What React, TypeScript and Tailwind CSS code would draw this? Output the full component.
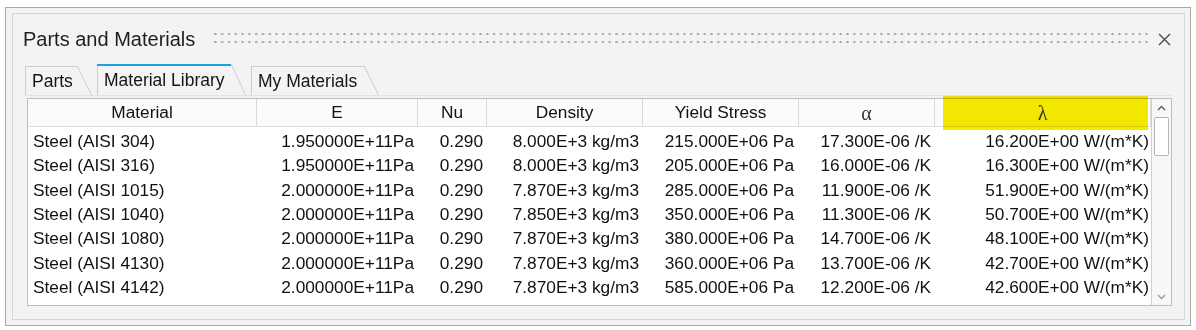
import React from 'react';

type Column = {
  label: string;
  width: string;
  body: string;
  serif?: boolean;
};

const columns: Column[] = [
  { label: 'Material', width: 'w-[229px]', body: 'justify-start pl-[5px]' },
  { label: 'E', width: 'w-[161px]', body: 'justify-end pr-[4px]' },
  { label: 'Nu', width: 'w-[69px]', body: 'justify-end pr-[4px]' },
  { label: 'Density', width: 'w-[156px]', body: 'justify-end pr-[4px]' },
  { label: 'Yield Stress', width: 'w-[156px]', body: 'justify-end pr-[5px]' },
  { label: 'α', width: 'w-[136px]', body: 'justify-end pr-[4px]', serif: true },
  { label: 'λ', width: 'w-[216px]', body: 'justify-end pr-[2px]', serif: true },
];

const rows: string[][] = [
  ['Steel (AISI 304)', '1.950000E+11Pa', '0.290', '8.000E+3 kg/m3', '215.000E+06 Pa', '17.300E-06 /K', '16.200E+00 W/(m*K)'],
  ['Steel (AISI 316)', '1.950000E+11Pa', '0.290', '8.000E+3 kg/m3', '205.000E+06 Pa', '16.000E-06 /K', '16.300E+00 W/(m*K)'],
  ['Steel (AISI 1015)', '2.000000E+11Pa', '0.290', '7.870E+3 kg/m3', '285.000E+06 Pa', '11.900E-06 /K', '51.900E+00 W/(m*K)'],
  ['Steel (AISI 1040)', '2.000000E+11Pa', '0.290', '7.850E+3 kg/m3', '350.000E+06 Pa', '11.300E-06 /K', '50.700E+00 W/(m*K)'],
  ['Steel (AISI 1080)', '2.000000E+11Pa', '0.290', '7.870E+3 kg/m3', '380.000E+06 Pa', '14.700E-06 /K', '48.100E+00 W/(m*K)'],
  ['Steel (AISI 4130)', '2.000000E+11Pa', '0.290', '7.870E+3 kg/m3', '360.000E+06 Pa', '13.700E-06 /K', '42.700E+00 W/(m*K)'],
  ['Steel (AISI 4142)', '2.000000E+11Pa', '0.290', '7.870E+3 kg/m3', '585.000E+06 Pa', '12.200E-06 /K', '42.600E+00 W/(m*K)'],
];

function Tab({ label, width, active }: { label: string; width: string; active?: boolean }) {
  const h = active ? 31 : 29;
  return (
    <div className={`flex ${active ? 'h-[31px]' : 'h-[29px]'}`}>
      <div
        className={`relative flex h-full items-end border-l border-t border-[#cdcdcd] pl-[6px] ${width} ${
          active ? 'pb-[5px]' : 'pb-[4px]'
        }`}
      >
        {active && <div className="absolute -top-px left-[-1px] right-0 h-[2px] bg-[#1c9fe3]" />}
        <span className="text-[17.5px] leading-[20px] text-[#151515]">{label}</span>
      </div>
      <svg width="15" height={h} className="shrink-0">
        <path d={`M0 0.5 L0.5 0.5 L14.5 ${h}`} fill="none" stroke="#cdcdcd" strokeWidth="1" />
      </svg>
    </div>
  );
}

function Chevron({ up, color }: { up?: boolean; color: string }) {
  return (
    <svg width="9" height="6" viewBox="0 0 9 6">
      <path d={up ? 'M1 5 L4.5 1.5 L8 5' : 'M1 1 L4.5 4.5 L8 1'} fill="none" stroke={color} strokeWidth="1.4" />
    </svg>
  );
}

export default function App(): JSX.Element {
  return (
    <div className="h-[330px] w-[1196px] overflow-hidden bg-white pl-[5px] pt-[7px] font-['Liberation_Sans',Arial,sans-serif] text-[#111]">
      <div className="h-[319px] w-[1186px] border border-[#a9a9a9] bg-[#f3f3f3] pl-[6px] pt-[5px]">
        <div className="flex h-[307px] w-[1173px] flex-col border border-[#d6d6d6]">
          {/* title bar */}
          <div className="mt-[14px] flex h-[23px] items-start pl-[10px] pr-[13px]">
            <div className="w-[189px] shrink-0 text-[20px] leading-[23px] text-[#1e1e1e]">Parts and Materials</div>
            <div className="mt-[2px] h-[16px] flex-1 bg-[radial-gradient(circle,#9d9d9d_0.9px,transparent_1.3px)] bg-[length:6.8px_8px]" />
            <svg width="13" height="13" viewBox="0 0 13 13" className="ml-[9px] mt-[5px] shrink-0">
              <path d="M1 1 L12 12 M12 1 L1 12" stroke="#4a4a4a" strokeWidth="1.4" />
            </svg>
          </div>

          {/* tabs */}
          <div className="ml-[12px] mr-[12px] mt-[13px] flex h-[32px] items-end gap-[6px] border-b border-[#e3e3e3]">
            <Tab label="Parts" width="w-[52px]" />
            <div className="ml-[-1px]">
              <Tab label="Material Library" width="w-[134px]" active />
            </div>
            <div className="ml-[-1px]">
              <Tab label="My Materials" width="w-[113px]" />
            </div>
          </div>

          {/* table */}
          <div className="relative ml-[14px] mt-[2px] flex h-[208px] w-[1145px] border border-[#bcbcbc] bg-white">
            <div className="flex-1 overflow-hidden">
              <div className="flex h-[28px] border-b border-[#dedede] bg-[#fbfbfb]">
                {columns.map((c) => (
                  <div
                    key={c.label}
                    className={`relative z-10 flex shrink-0 items-center justify-center border-r border-[#d8d8d8] ${c.width} ${
                      c.serif ? "font-['Liberation_Serif',serif] text-[20px] text-[#333]" : 'text-[17.3px]'
                    }`}
                  >
                    {c.label}
                  </div>
                ))}
              </div>
              <div className="pt-[2px]">
                {rows.map((r) => (
                  <div key={r[0]} className="flex h-[24.3px] items-center">
                    {r.map((v, i) => (
                      <div
                        key={i}
                        className={`flex shrink-0 whitespace-nowrap text-[17.3px] leading-[24px] ${columns[i].width} ${columns[i].body}`}
                      >
                        {v}
                      </div>
                    ))}
                  </div>
                ))}
              </div>
            </div>

            {/* scrollbar */}
            <div className="flex w-[20px] shrink-0 flex-col items-center border-l border-[#d0d0d0] bg-[#f7f7f7]">
              <div className="mt-[6px]">
                <Chevron up color="#5a5a5a" />
              </div>
              <div className="mt-[6px] h-[39px] w-[15px] rounded-[2px] border border-[#b5b5b5] bg-white" />
              <div className="flex-1" />
              <div className="mb-[5px]">
                <Chevron color="#9a9a9a" />
              </div>
            </div>

            {/* highlighter mark */}
            <div className="absolute left-[915px] top-[-3px] h-[34px] w-[205px] bg-[#f7ea00] mix-blend-multiply" />
          </div>
        </div>
      </div>
    </div>
  );
}
